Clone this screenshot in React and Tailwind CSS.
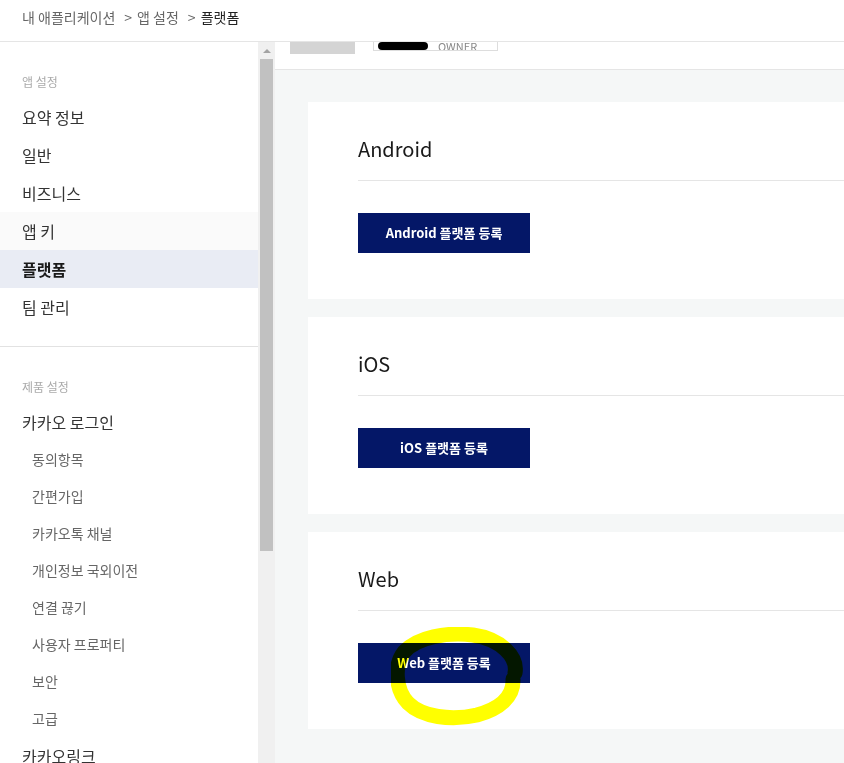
import React from 'react';

const appMenu = ['요약 정보', '일반', '비즈니스', '앱 키', '플랫폼', '팀 관리'];
const loginSub = ['동의항목', '간편가입', '카카오톡 채널', '개인정보 국외이전', '연결 끊기', '사용자 프로퍼티', '보안', '고급'];

const platforms = [
  { name: 'Android', label: 'Android 플랫폼 등록' },
  { name: 'iOS', label: 'iOS 플랫폼 등록' },
  { name: 'Web', label: 'Web 플랫폼 등록', marked: true },
];

const font = { fontFamily: '"Noto Sans CJK KR", "Noto Sans", sans-serif' };

const Sidebar = () => (
  <aside className="w-[258px] shrink-0 bg-white overflow-hidden">
    {/* 앱 설정 */}
    <div className="pt-[31px] pb-5 border-b border-[#e2e2e2]">
      <p className="px-[22px] mb-[7px] text-[12px] leading-[18px] text-[#aaaaaa]">앱 설정</p>
      {appMenu.map((item) => (
        <div
          key={item}
          className={
            'h-[38px] flex items-center px-[22px] text-[16px] ' +
            (item === '플랫폼'
              ? 'bg-[#e9ecf4] font-bold text-[#1a1a1a]'
              : item === '앱 키'
              ? 'bg-[#fafafa] text-[#333333]'
              : 'text-[#333333]')
          }
        >
          {item}
        </div>
      ))}
    </div>

    {/* 제품 설정 */}
    <div className="pt-[31px]">
      <p className="px-[22px] mb-[7px] text-[12px] leading-[18px] text-[#aaaaaa]">제품 설정</p>
      <div className="h-[38px] flex items-center px-[22px] text-[16px] text-[#333333]">카카오 로그인</div>
      {loginSub.map((item) => (
        <div key={item} className="h-[37px] flex items-center pl-[32px] text-[14px] text-[#666666]">
          {item}
        </div>
      ))}
      <div className="h-[38px] flex items-center px-[22px] text-[16px] text-[#333333]">카카오링크</div>
    </div>
  </aside>
);

const Scrollbar = () => (
  <div className="w-[17px] shrink-0 bg-[#f0f0f0] flex flex-col items-center">
    <div className="h-[17px] flex items-center justify-center">
      <div className="w-0 h-0 border-l-[4px] border-r-[4px] border-b-[4px] border-l-transparent border-r-transparent border-b-[#a3a3a3]" />
    </div>
    <div className="w-[13px] h-[492px] bg-[#c1c1c1]" />
  </div>
);

// yellow highlighter scribble drawn over the Web button
const Marker = () => (
  <svg
    className="absolute left-[33px] top-[-16px] mix-blend-multiply pointer-events-none"
    width="132"
    height="100"
    viewBox="0 0 132 100"
  >
    <path
      d="M124 46 C127 30 110 12 82 8 C56 5 26 10 13 25 C3 38 4 62 17 76 C31 90 60 94 86 88 C108 82 123 70 122 52"
      fill="none"
      stroke="#ffff00"
      strokeWidth="15"
      strokeLinecap="round"
    />
  </svg>
);

const PlatformCard = ({ name, label, marked }) => (
  <section className="bg-white pl-[50px] pt-[33px] pb-[46px]">
    <h2 className="text-[20px] leading-[28px] text-[#1a1a1a] pb-[17px] border-b border-[#e5e5e5]">{name}</h2>
    <div className="relative mt-[32px] w-[172px]">
      <button className="w-[172px] h-[40px] bg-[#041767] text-white text-[13px] font-bold">{label}</button>
      {marked && <Marker />}
    </div>
  </section>
);

export default function App() {
  return (
    <div className="h-[763px] w-[844px] overflow-hidden flex flex-col bg-white" style={font}>
      {/* Breadcrumb */}
      <div className="h-[42px] shrink-0 border-b border-[#e5e5e5] flex items-start pt-[7px] px-[22px] text-[14px] leading-[20px] text-[#666666]">
        <span>내 애플리케이션</span>
        <span className="ml-[9px] mr-[5px]">&gt;</span>
        <span>앱 설정</span>
        <span className="ml-[9px] mr-[5px]">&gt;</span>
        <span className="text-[#222222]">플랫폼</span>
      </div>

      <div className="flex flex-1 min-h-0">
        <Sidebar />
        <Scrollbar />

        <main className="flex-1 min-w-0 bg-[#f5f7f7] overflow-hidden">
          {/* Scrolled-off app header */}
          <div className="h-[28px] bg-white border-b border-[#e5e5e5] flex items-start pl-[15px] overflow-hidden">
            <div className="w-[65px] h-[12px] bg-[#d4d4d4]" />
            <div className="ml-[18px] h-[9px] w-[125px] border border-t-0 border-[#dddddd] flex items-end overflow-hidden">
              <div className="ml-[4px] w-[50px] h-[8px] bg-black rounded-sm" />
              <span className="ml-[10px] text-[11px] leading-[11px] text-[#888888] mb-[-2px]">OWNER</span>
            </div>
          </div>

          <div className="pl-[33px] pt-[32px] flex flex-col gap-[18px]">
            {platforms.map((p) => (
              <PlatformCard key={p.name} {...p} />
            ))}
          </div>
        </main>
      </div>
    </div>
  );
}
